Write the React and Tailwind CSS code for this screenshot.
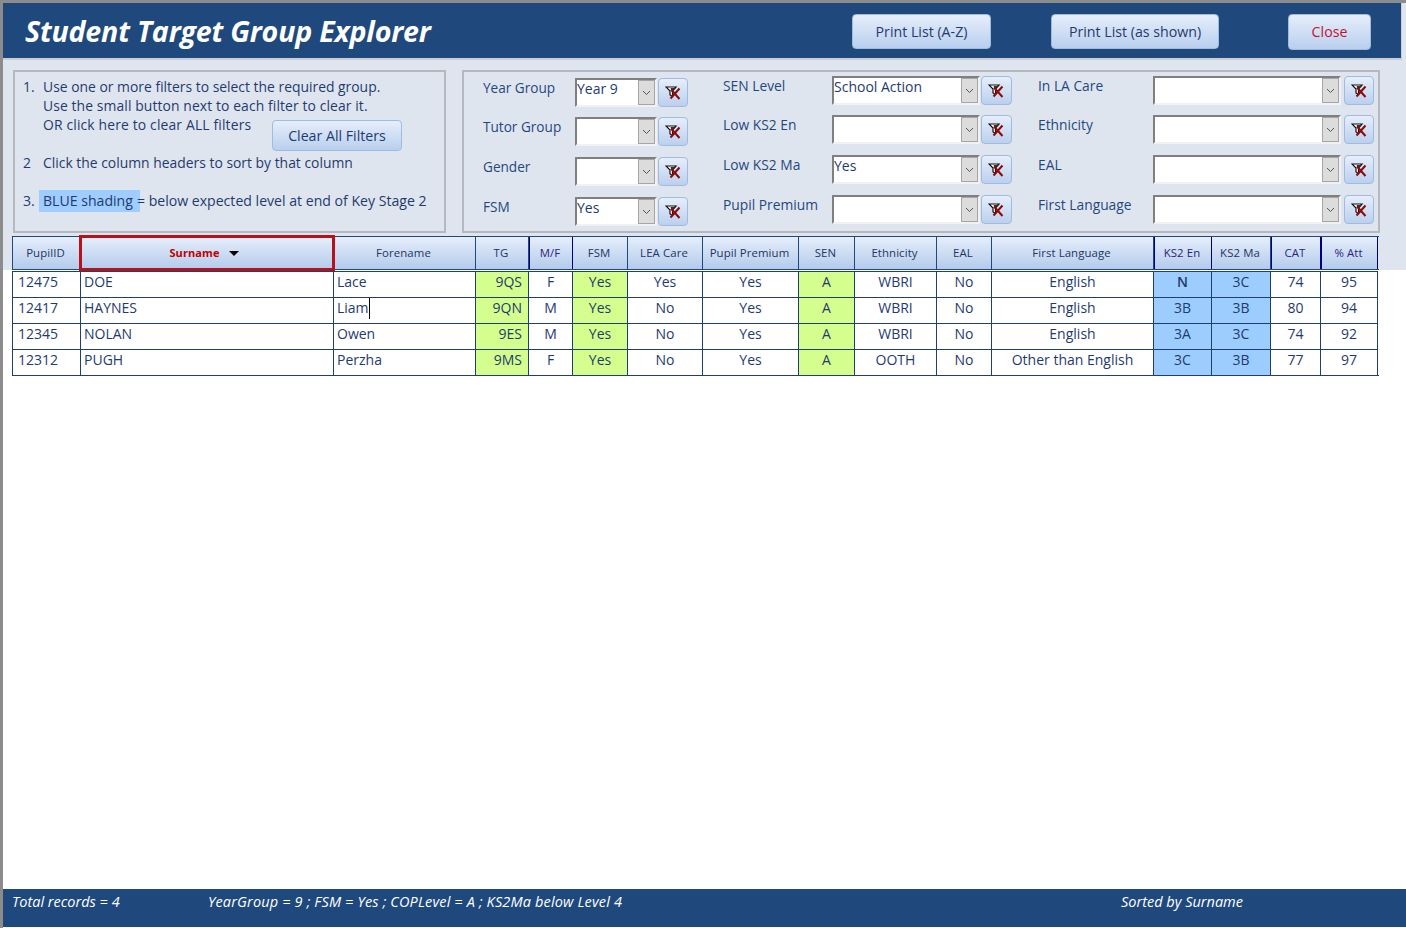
const gridCols = "grid grid-cols-[69px_253px_142px_53px_44px_55px_75px_96px_56px_82px_55px_162px_58px_59px_50px_57px]";

const headers = [
  ["PupilID", false], ["Surname", false], ["Forename", false], ["TG", false], ["M/F", true], ["FSM", false],
  ["LEA Care", false], ["Pupil Premium", false], ["SEN", false], ["Ethnicity", false], ["EAL", false],
  ["First Language", false], ["KS2 En", true], ["KS2 Ma", false], ["CAT", true], ["% Att", true],
];

const rows = [
  ["12475", "DOE", "Lace", "9QS", "F", "Yes", "Yes", "Yes", "A", "WBRI", "No", "English", "N", "3C", "74", "95"],
  ["12417", "HAYNES", "Liam", "9QN", "M", "Yes", "No", "Yes", "A", "WBRI", "No", "English", "3B", "3B", "80", "94"],
  ["12345", "NOLAN", "Owen", "9ES", "M", "Yes", "No", "Yes", "A", "WBRI", "No", "English", "3A", "3C", "74", "92"],
  ["12312", "PUGH", "Perzha", "9MS", "F", "Yes", "No", "Yes", "A", "OOTH", "No", "Other than English", "3C", "3B", "77", "97"],
];

function FilterIcon() {
  return (
    <svg width="17" height="16" viewBox="0 0 17 16" className="block">
      <path d="M1 2 L11 2 L7.5 6 L7.5 11.5 L5 10 L5 6 Z" fill="#fff" stroke="#111" strokeWidth="1.2" />
      <path d="M5.5 3 L10 3 L7 6 Z" fill="#333" />
      <path d="M5.5 13.5 L14.5 3.5 M6 4.5 L14.5 14" stroke="#8b0a0a" strokeWidth="2" fill="none" />
    </svg>
  );
}

function ClearButton({ w }) {
  return (
    <button className={`${w} h-[29px] shrink-0 flex items-center justify-center rounded-[4px] border border-[#9fbbdf] bg-gradient-to-b from-[#e6eefa] to-[#bbd0ee]`}>
      <FilterIcon />
    </button>
  );
}

function Combo({ value, w }) {
  return (
    <div className={`${w} h-[29px] shrink-0 flex bg-white border-2 border-t-[#7f7f7f] border-l-[#7f7f7f] border-r-[#f1f1f1] border-b-[#f1f1f1]`}>
      <div className="flex-1 text-[14px] leading-[18px] text-[#1f3b6e] whitespace-nowrap overflow-hidden">{value}</div>
      <div className="w-[17px] h-[25px] bg-[#dcdcdc] border border-[#a6a6a6] flex items-center justify-center">
        <svg width="9" height="6" viewBox="0 0 9 6"><path d="M1 1 L4.5 4.5 L8 1" fill="none" stroke="#555" strokeWidth="1" /></svg>
      </div>
    </div>
  );
}

function FilterRow({ label, value, labelW, comboW, gap, h, btnW }) {
  return (
    <div className={`flex items-start shrink-0 ${h}`}>
      <div className={`${labelW} shrink-0 leading-[20px] text-[#1f497d] whitespace-nowrap`}>{label}</div>
      <Combo value={value} w={comboW} />
      <div className={gap}><ClearButton w={btnW} /></div>
    </div>
  );
}

function Btn({ children, className, red }) {
  return (
    <button className={`shrink-0 rounded-[4px] border border-[#9fbbdf] bg-gradient-to-b from-[#e6eefa] to-[#b9cfee] text-[14.2px] whitespace-nowrap ${red ? "text-[#c8102e]" : "text-[#1f3b6e]"} ${className}`}>
      {children}
    </button>
  );
}

function FilterColumn({ items, pt, labelW, comboW, gap, className, btnW }) {
  return (
    <div className={`flex flex-col ${pt} ${className}`}>
      {items.map(([label, value], i) => (
        <FilterRow key={label} label={label} value={value} labelW={labelW} comboW={comboW} gap={gap} btnW={btnW}
          h={i === 0 ? "h-[39px]" : "h-[40px]"} />
      ))}
    </div>
  );
}

export default function App() {
  return (
    <div className="w-[1406px] h-[928px] flex flex-col bg-white border-l-[3px] border-t-[3px] border-[#8c8c8c] font-['Open_Sans','Noto_Sans',sans-serif] overflow-hidden">
      <div className="h-[233px] shrink-0 bg-[#dfe5ee] flex flex-col">
        <header className="w-[1399px] h-[57px] shrink-0 bg-[#1f497d] border-r border-b-[2px] border-[#c9ced6] pt-[2px] flex items-center">
          <h1 className="ml-[22px] w-[827px] shrink-0 text-[28.6px] font-bold italic text-white whitespace-nowrap tracking-[-0.2px] leading-none">Student Target Group Explorer</h1>
          <Btn className="w-[139px] h-[35px]">Print List (A-Z)</Btn>
          <Btn className="ml-[60px] w-[168px] h-[35px]">Print List (as shown)</Btn>
          <Btn red className="ml-[69px] w-[83px] h-[36px]">Close</Btn>
        </header>
        <div className="flex ml-[10px] mt-[10px] gap-[16px]">
          <section className="w-[433px] h-[163px] border-2 border-[#b5b9bf] pt-[5px] pl-[8px] text-[13.9px] leading-[19px] text-[#1f3b6e]">
            <div className="flex"><span className="w-[20px]">1.</span><span>Use one or more filters to select the required group.</span></div>
            <div className="pl-[20px] tracking-[0.1px]">Use the small button next to each filter to clear it.</div>
            <div className="pl-[20px] flex items-start">
              <span className="w-[229px] shrink-0 tracking-[0.15px]">OR click here to clear ALL filters</span>
              <Btn className="w-[130px] h-[31px] mt-[5px]">Clear All Filters</Btn>
            </div>
            <div className="flex mt-[2px]"><span className="w-[20px]">2</span><span>Click the column headers to sort by that column</span></div>
            <div className="flex mt-[19px] text-[14.1px]">
              <span className="w-[16px]">3.</span>
              <span className="bg-[#9fcdff] pl-[4px] pr-[7px] h-[22px] leading-[21px] -mt-[1px]">BLUE shading</span>
              <span className="relative -ml-[3px]">= below expected level at end of Key Stage 2</span>
            </div>
          </section>
          <section className="w-[918px] h-[163px] border-2 border-[#b5b9bf] flex text-[13.8px]">
            <FilterColumn pt="pt-[6px]" labelW="w-[111px] pl-[19px] text-[13.6px]" comboW="w-[82px]" gap="ml-[1px]" btnW="w-[30px]" className="w-[259px]"
              items={[["Year Group", "Year 9"], ["Tutor Group", ""], ["Gender", ""], ["FSM", "Yes"]]} />
            <FilterColumn pt="pt-[4px]" labelW="w-[109px]" comboW="w-[148px]" gap="ml-[1px]" btnW="w-[31px]" className="w-[315px]"
              items={[["SEN Level", "School Action"], ["Low KS2 En", ""], ["Low KS2 Ma", "Yes"], ["Pupil Premium", ""]]} />
            <FilterColumn pt="pt-[4px]" labelW="w-[115px]" comboW="w-[188px]" gap="ml-[3px]" btnW="w-[30px]" className="w-[340px]"
              items={[["In LA Care", ""], ["Ethnicity", ""], ["EAL", ""], ["First Language", ""]]} />
          </section>
        </div>
      </div>

      <div className="h-[34px] shrink-0 bg-[#dfe5ee] pl-[9px]">
        <div className={`${gridCols} w-[1367px] h-[34px] border-y border-[#1f497d]`}>
          {headers.map(([h, isNavy], i) => (
            <div key={h} className={`relative flex items-center justify-center pr-[2px] bg-gradient-to-b from-[#e6eefa] to-[#b4cbec] text-[11.4px] tracking-[0.1px] border-r ${i === 0 ? "border-l" : ""} ${isNavy ? "border-l border-[#000080] text-[#2c1f7d]" : "border-[#1f497d] text-[#24365f]"}`}>
              {i === 1 ? (
                <div className="absolute -left-[2px] -top-[2px] w-[256px] h-[36px] z-10 border-[3px] border-[#b5121b] flex items-center justify-center pr-[6px]">
                  <span className="font-bold text-[11px] text-[#c00000]">Surname</span>
                  <span className="ml-[9px] mt-[1px] w-0 h-0 border-x-[5px] border-x-transparent border-t-[5px] border-t-black" />
                </div>
              ) : h}
            </div>
          ))}
        </div>
      </div>

      <div className="pl-[9px] pt-[1px] flex-1">
        <div className={`${gridCols} w-[1367px] border-b border-[#1f3f6e]`}>
          {rows.map((row, r) => row.map((v, c) => {
            const green = c === 3 || c === 5 || c === 8;
            const blue = c === 12 || c === 13;
            const left = c < 3;
            return (
              <div key={`${r}-${c}`} className={`h-[26px] border-t border-r border-[#1f3f6e] text-[14px] leading-[20px] text-[#1f3b6e] whitespace-nowrap overflow-hidden ${c === 0 ? "border-l pl-[5px]" : ""} ${c === 1 || c === 2 ? "pl-[3px]" : ""} ${c === 3 ? "text-right pr-[6px]" : ""} ${!left && c !== 3 ? "text-center" : ""} ${green ? "bg-[#d4ff8f]" : ""} ${blue ? "bg-[#9dcdff]" : ""} ${v === "N" ? "font-semibold" : ""}`}>
                {r === 1 && c === 2 ? <span className="border-r border-black inline-block h-[21px]">{v}</span> : v}
              </div>
            );
          }))}
        </div>
      </div>

      <footer className="h-[38px] shrink-0 bg-[#1f497d] flex items-start pt-[2px] mb-[1px] text-[14.5px] italic text-white whitespace-nowrap">
        <span className="ml-[9px] w-[196px] shrink-0">Total records = 4</span>
        <span className="w-[913px] shrink-0 tracking-[0.15px]">YearGroup = 9 ; FSM = Yes ; COPLevel = A ; KS2Ma below Level 4</span>
        <span>Sorted by Surname</span>
      </footer>
    </div>
  );
}
